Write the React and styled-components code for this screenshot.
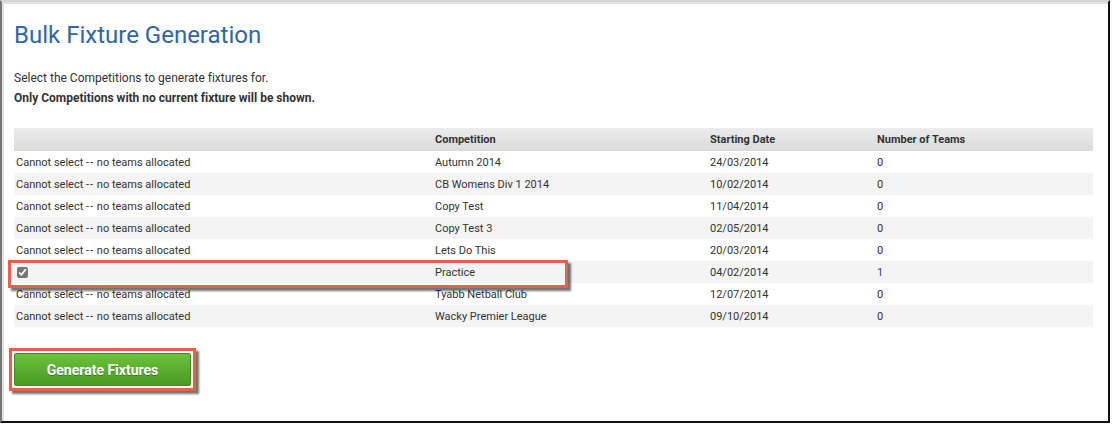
import React from 'react';
import styled, {createGlobalStyle} from "styled-components";

const GlobalStyle = createGlobalStyle`
  body {
    margin: 0;
    background: #fff;
    font-family: Roboto, "Liberation Sans", sans-serif;
    color: #333;
    font-variant-ligatures: none;
  }
`;

const Frame = styled.div `
  width: 1110px;
  height: 423px;
  box-sizing: border-box;
  border-top: 2px solid #d4d4d4;
  border-left: 2px solid #777;
  border-right: 2px solid #111;
  border-bottom: 2px solid #111;
  box-shadow: inset 2px 2px 0 #e2e2e2;
  padding: 18px 13px 0 12px;
`;

const Title = styled.h1 `
  margin: 0 0 18px;
  font-size: 24px;
  font-weight: 400;
  line-height: 30px;
  color: #2f67a6;
  letter-spacing: 0;
`;

const Intro = styled.p `
  margin: 0;
  font-size: 12px;
  line-height: 20px;
  font-weight: ${props => props.bold ? 700 : 400};
`;

const TableWrap = styled.div `
  position: relative;
  margin-top: 20px;
`;

const Table = styled.table `
  width: 1079px;
  border-collapse: collapse;
  font-size: 11px;
`;

const HeadRow = styled.tr `
  height: 23px;
  background: linear-gradient(#ececec, #dadada);
`;

const Th = styled.th `
  text-align: left;
  font-weight: 700;
  padding: 0 2px;
  width: ${props => props.w}px;
`;

const Row = styled.tr `
  height: 22px;
  background: ${props => props.alt ? "#f4f4f4" : "#fff"};
`;

const Td = styled.td `
  padding: 0 2px;
  color: ${props => props.link ? "#3c3a8c" : "#333"};
`;

const Dashes = styled.span `
  letter-spacing: 1px;
`;

const Check = styled.input `
  margin: 0 0 0 1px;
  width: 11px;
  height: 11px;
  vertical-align: middle;
  accent-color: #777;
`;

const Highlight = styled.div `
  position: absolute;
  left: -6px;
  top: 132px;
  width: 560px;
  height: 28px;
  box-sizing: border-box;
  border: 3px solid #e8604c;
  box-shadow: 3px 3px 2px rgba(0, 0, 0, 0.55);
  pointer-events: none;
`;

const ButtonFrame = styled.div `
  display: inline-block;
  margin: 21px 0 0 -5px;
  padding: 2px;
  border: 3px solid #e8604c;
  box-shadow: 3px 3px 2px rgba(0, 0, 0, 0.55);
`;

const Button = styled.button `
  display: block;
  width: 177px;
  height: 33px;
  border: 1px solid #3f8a1d;
  border-radius: 2px;
  background: linear-gradient(#6cc23e, #4a9a22);
  color: #fff;
  font-family: Roboto, "Liberation Sans", sans-serif;
  font-size: 14px;
  font-weight: 700;
  text-shadow: 0 1px 0 rgba(0, 0, 0, 0.3);
`;

const rows = [
  {name: "Autumn 2014", date: "24/03/2014", teams: 0},
  {name: "CB Womens Div 1 2014", date: "10/02/2014", teams: 0},
  {name: "Copy Test", date: "11/04/2014", teams: 0},
  {name: "Copy Test 3", date: "02/05/2014", teams: 0},
  {name: "Lets Do This", date: "20/03/2014", teams: 0},
  {name: "Practice", date: "04/02/2014", teams: 1},
  {name: "Tyabb Netball Club", date: "12/07/2014", teams: 0},
  {name: "Wacky Premier League", date: "09/10/2014", teams: 0},
];

const App = () => {
  return (
    <Frame>
      <GlobalStyle/>
      <Title>Bulk Fixture Generation</Title>
      <Intro>Select the Competitions to generate fixtures for.</Intro>
      <Intro bold>Only Competitions with no current fixture will be shown.</Intro>
      <TableWrap>
        <Table>
          <thead>
            <HeadRow>
              <Th w={415}></Th>
              <Th w={271}>Competition</Th>
              <Th w={163}>Starting Date</Th>
              <Th>Number of Teams</Th>
            </HeadRow>
          </thead>
          <tbody>
            {rows.map((r, i) => (
              <Row key={r.name} alt={i % 2 === 1}>
                <Td>
                  {r.teams > 0
                    ? <Check type="checkbox" defaultChecked/>
                    : <>Cannot select <Dashes>--</Dashes> no teams allocated</>}
                </Td>
                <Td>{r.name}</Td>
                <Td>{r.date}</Td>
                <Td link={r.teams > 0}>{r.teams}</Td>
              </Row>
            ))}
          </tbody>
        </Table>
        <Highlight/>
      </TableWrap>
      <ButtonFrame>
        <Button>Generate Fixtures</Button>
      </ButtonFrame>
    </Frame>
  );
};

export default App;
